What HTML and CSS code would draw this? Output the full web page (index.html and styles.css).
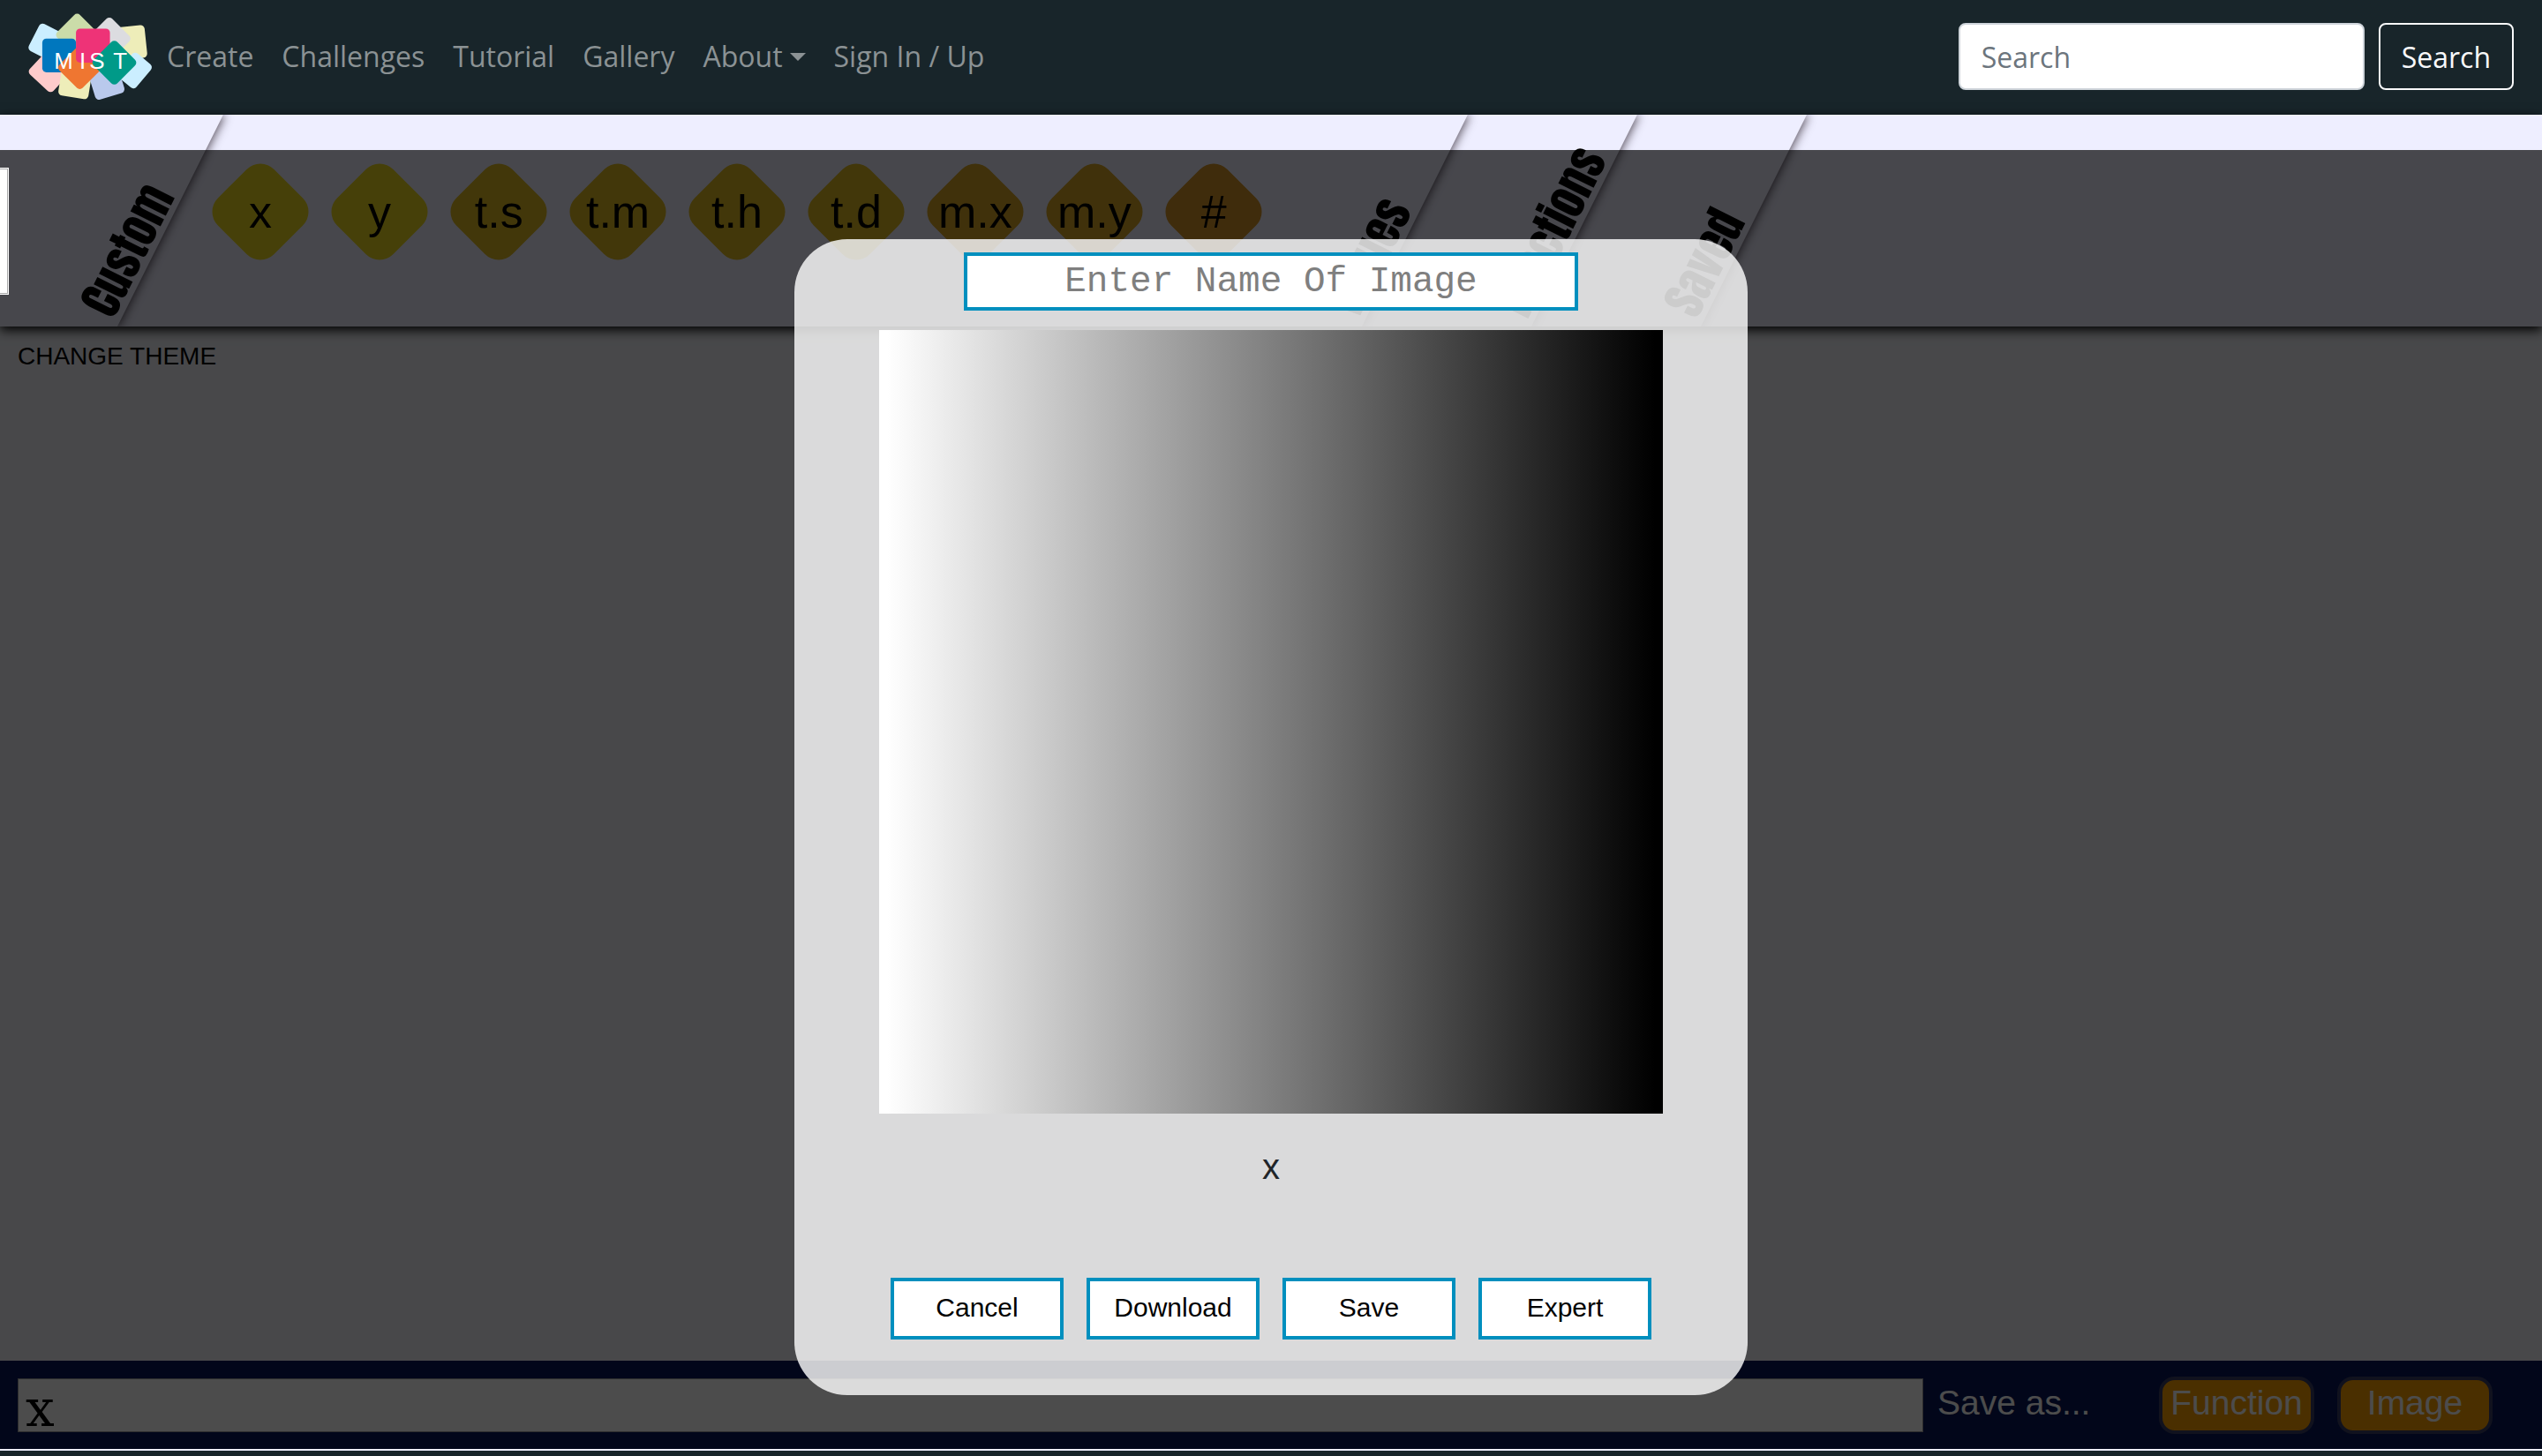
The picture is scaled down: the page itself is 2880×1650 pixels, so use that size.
FILE: index.html
```html
<!DOCTYPE html>
<html lang="en">
<head>
<meta charset="utf-8">
<title>MIST</title>
<link rel="stylesheet" href="styles.css">
</head>
<body>
<header class="navbar">
  <a class="brand" href="#" aria-label="MIST home">
    <svg class="logo" viewBox="30 36 434 312" aria-hidden="true">
      <rect x="50" y="93" width="104" height="104" rx="14" fill="#cbeeff" transform="rotate(27 102 145)"/>
      <rect x="48" y="204" width="110" height="90" rx="14" fill="#fdcbcb" transform="rotate(43 103 249)"/>
      <rect x="344" y="88" width="94" height="112" rx="14" fill="#eeedb9" transform="rotate(-6 391 144)"/>
      <rect x="356" y="188" width="84" height="104" rx="14" fill="#cbeeff" transform="rotate(40 398 240)"/>
      <rect x="144" y="232" width="104" height="100" rx="14" fill="#eeedb9" transform="rotate(9 196 282)"/>
      <rect x="252" y="232" width="104" height="98" rx="14" fill="#b9c9ec" transform="rotate(-17 304 281)"/>
      <rect x="148" y="63" width="110" height="110" rx="14" fill="#cbdca9" transform="rotate(45 203 118)"/>
      <rect x="258" y="76" width="110" height="110" rx="14" fill="#dcdce0" transform="rotate(45 313 131)"/>
      <rect x="84" y="131" width="115" height="115" rx="14" fill="#0077be"/>
      <rect x="156" y="174" width="112" height="112" rx="14" fill="#ef7631" transform="rotate(45 212 230)"/>
      <rect x="199" y="97" width="116" height="116" rx="14" fill="#ee3377"/>
      <rect x="273" y="156" width="114" height="114" rx="14" fill="#009a88" transform="rotate(45 330 213)"/>
      <g class="logo-text">
        <text x="157" y="234">M</text>
        <text x="222" y="234">I</text>
        <text x="271" y="234">S</text>
        <text x="350" y="234">T</text>
      </g>
    </svg>
  </a>
  <nav class="nav-links">
    <a href="#">Create</a>
    <a href="#">Challenges</a>
    <a href="#">Tutorial</a>
    <a href="#">Gallery</a>
    <a href="#" class="dropdown">About</a>
    <a href="#">Sign In / Up</a>
  </nav>
  <form class="search">
    <input type="search" placeholder="Search" aria-label="Search">
    <button type="button">Search</button>
  </form>
</header>

<main class="workspace">
  <section class="menu">
    <div class="panel panel-custom"><span class="tab">Custom</span></div>
    <div class="panel panel-values">
      <div class="tiles">
        <div class="tile yellow"><span>x</span></div>
        <div class="tile yellow"><span>y</span></div>
        <div class="tile gold"><span>t.s</span></div>
        <div class="tile gold"><span>t.m</span></div>
        <div class="tile gold"><span>t.h</span></div>
        <div class="tile gold"><span>t.d</span></div>
        <div class="tile amber"><span>m.x</span></div>
        <div class="tile amber"><span>m.y</span></div>
        <div class="tile orange"><span>#</span></div>
      </div>
      <span class="tab">Values</span>
    </div>
    <div class="panel panel-functions"><span class="tab">Functions</span></div>
    <div class="panel panel-saved"><span class="tab">Saved</span></div>
  </section>
  <section class="canvas-area">
    <a class="theme" href="#">CHANGE THEME</a>
  </section>
  <section class="function-bar">
    <input class="formula" type="text" value="x" aria-label="Formula">
    <span class="save-label">Save as...</span>
    <button type="button">Function</button>
    <button type="button">Image</button>
  </section>

  <div class="overlay">
    <div class="drawer"></div>
    <div class="modal" role="dialog" aria-label="Save image">
      <input class="image-name" type="text" placeholder="Enter Name Of Image" aria-label="Image name">
      <div class="preview"></div>
      <p class="code">x</p>
      <div class="actions">
        <button type="button">Cancel</button>
        <button type="button">Download</button>
        <button type="button">Save</button>
        <button type="button">Expert</button>
      </div>
    </div>
  </div>
</main>
<footer class="footer"></footer>
</body>
</html>
```
FILE: styles.css
```css
* { box-sizing: border-box; }

body {
  margin: 0;
  min-height: 100vh;
  display: flex;
  flex-direction: column;
  background: #eeeeff;
  font-family: "Liberation Sans", Arial, sans-serif;
  overflow: hidden;
}

button, input { font-family: inherit; margin: 0; }

/* Navigation */
.navbar {
  display: flex;
  align-items: center;
  height: 130px;
  padding: 0 32px 2px 30px;
  background: #18252a;
  font-family: "Open Sans", sans-serif;
  font-size: 32px;
  line-height: 48px;
}
.brand { display: flex; }
.logo { width: 144px; height: 104px; }
.logo-text text {
  fill: #fff;
  font: 78px "Liberation Sans", Arial, sans-serif;
  text-anchor: middle;
}
.nav-links { display: flex; gap: 32px; margin-left: 15px; }
.nav-links a {
  color: #8b9294;
  text-decoration: none;
}
.dropdown { display: flex; align-items: center; gap: 8px; }
.dropdown::after {
  content: "";
  border: 9px solid transparent;
  border-top-color: currentColor;
  border-bottom: 0;
}
.search { display: flex; gap: 16px; margin-left: auto; }
.search input, .search button {
  height: 76px;
  border: 2px solid #ced4da;
  border-radius: 8px;
  padding: 0 24px;
  font-size: 32px;
}
.search input { width: 460px; background: #fff; }
.search input::placeholder { color: #6c757d; opacity: 1; }
.search button { background: none; border-color: #f8f9fa; color: #f8f9fa; }

/* Workspace */
.workspace {
  flex: 1;
  display: flex;
  flex-direction: column;
  position: relative;
}
.menu {
  display: flex;
  height: 240px;
  padding-right: 33.1%;
  background: #eeeeff;
  box-shadow: 0 4px 12px #000;
  overflow: hidden;
  position: relative;
  z-index: 1;
}
.panel {
  display: flex;
  align-items: flex-end;
  justify-content: flex-end;
  position: relative;
  width: 192px;
}
.panel::before {
  content: "";
  position: absolute;
  inset: 0;
  background: #eeeeff;
  box-shadow: 2px 0 10px rgba(40, 30, 40, .75);
  transform: skewX(-26.565deg);
  transform-origin: bottom;
}
.panel-custom { width: 133px; z-index: 4; }
.panel-custom::before { left: -200px; }
.panel-values { flex: 1; z-index: 3; }
.panel-functions { z-index: 2; }
.panel-saved { z-index: 1; }
.tab {
  position: relative;
  width: 0;
  padding-left: 8px;
  white-space: nowrap;
  font: 52px/44px Impact, "Anton", "Liberation Sans Narrow", "DejaVu Sans Condensed", sans-serif;
  transform: rotate(-63.435deg);
  transform-origin: left bottom;
}
.tiles {
  display: flex;
  align-self: flex-start;
  gap: 45px;
  flex: 1;
  padding: 65px 0 0 117px;
  position: relative;
}
.tile {
  width: 90px;
  height: 90px;
  border-radius: 22px;
  transform: rotate(45deg);
  display: flex;
  align-items: center;
  justify-content: center;
  font-size: 52px;
  line-height: 56px;
}
.tile span { transform: rotate(-45deg); }
.yellow { background: #ecd820; }
.gold { background: #dcb823; }
.amber { background: #d5a426; }
.orange { background: #d29328; }

.canvas-area {
  flex: 1;
  padding: 16px 20px;
  background: #f0f2f8;
}
.theme {
  color: #000;
  text-decoration: none;
  font-size: 28px;
  line-height: 36px;
}

.function-bar {
  display: flex;
  align-items: center;
  gap: 26px;
  height: 100px;
  padding: 0 56px 0 20px;
  background: #071757;
  color: #fff;
  font-size: 39px;
}
.formula {
  flex: 1;
  height: 61px;
  border: 1px solid #999;
  padding: 8px 8px 0;
  background: #fff;
  color: #000;
  font: 58px/52px "DejaVu Serif", serif;
}
.save-label {
  width: 225px;
  margin-left: -10px;
  padding-bottom: 4px;
}
.function-bar button {
  width: 176px;
  height: 65px;
  padding: 0 0 4px;
  border: 4px solid #393c64;
  border-radius: 18px;
  background: #f79d00;
  color: #fff;
  font-size: 39px;
}

/* Save dialog */
.overlay {
  position: absolute;
  inset: 40px 0 0;
  z-index: 5;
  padding-top: 101px;
  background: rgba(0, 0, 0, .7);
}
.drawer {
  position: absolute;
  left: 0;
  top: 20px;
  width: 10px;
  height: 144px;
  border: 1px solid #fff;
  border-left: 0;
  background: #fff;
  box-shadow: inset -1px 0 #aaa, inset 0 1px #aaa, inset 0 -1px #aaa;
}
.modal {
  display: flex;
  flex-direction: column;
  align-items: center;
  width: 1080px;
  margin: 0 auto;
  padding: 15px 0 63px;
  border-radius: 60px;
  background: rgba(255, 255, 255, .8);
}
.image-name {
  width: 696px;
  height: 66px;
  border: 4px solid #008fbe;
  padding: 0;
  background: #fff;
  font: 41px "Courier New", "Liberation Mono", monospace;
  text-align: center;
}
.image-name::placeholder { color: #7f7f7f; opacity: 1; }
.preview {
  width: 888px;
  height: 888px;
  margin-top: 22px;
  background: linear-gradient(to right, #fff 1%, #000 99%);
}
.code {
  height: 186px;
  margin: 0;
  padding-top: 36px;
  color: #212529;
  font-size: 40px;
  line-height: 48px;
}
.actions { display: flex; gap: 26px; }
.actions button {
  width: 196px;
  height: 70px;
  border: 4px solid #008fbe;
  padding: 0 0 2px;
  background: #fff;
  color: #000;
  font-size: 30px;
}

.footer {
  height: 8px;
  border-top: 2px solid #eeeeff;
  background: #18252a;
}
```
